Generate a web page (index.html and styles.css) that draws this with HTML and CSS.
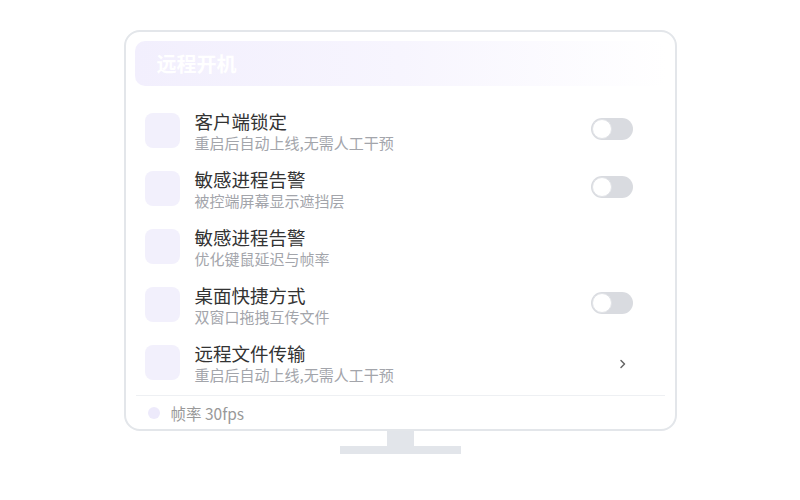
FILE: index.html
```html
<!DOCTYPE html>
<html lang="zh-CN">
<head>
    <meta charset="UTF-8">
    <meta name="viewport" content="width=device-width, initial-scale=1.0">
    <title>远程开机</title>
    <link rel="stylesheet" href="styles.css">
</head>
<body>
    <div class="monitor">
        <div class="screen-header">远程开机</div>

        <div class="row">
            <div class="row-icon"></div>
            <div class="row-text">
                <div class="row-title">客户端锁定</div>
                <div class="row-sub">重启后自动上线,无需人工干预</div>
            </div>
            <div class="row-action"><span class="toggle"></span></div>
        </div>
        <div class="row">
            <div class="row-icon"></div>
            <div class="row-text">
                <div class="row-title">敏感进程告警</div>
                <div class="row-sub">被控端屏幕显示遮挡层</div>
            </div>
            <div class="row-action"><span class="toggle"></span></div>
        </div>
        <div class="row">
            <div class="row-icon"></div>
            <div class="row-text">
                <div class="row-title">敏感进程告警</div>
                <div class="row-sub">优化键鼠延迟与帧率</div>
            </div>
            <div class="row-action"></div>
        </div>
        <div class="row">
            <div class="row-icon"></div>
            <div class="row-text">
                <div class="row-title">桌面快捷方式</div>
                <div class="row-sub">双窗口拖拽互传文件</div>
            </div>
            <div class="row-action"><span class="toggle"></span></div>
        </div>
        <div class="row">
            <div class="row-icon"></div>
            <div class="row-text">
                <div class="row-title">远程文件传输</div>
                <div class="row-sub">重启后自动上线,无需人工干预</div>
            </div>
            <div class="row-action">
                <svg class="chevron" width="8" height="10" viewBox="0 0 8 10">
                    <polyline points="2,1.5 5.5,5 2,8.5" fill="none" stroke="#666" stroke-width="1.5" stroke-linecap="round" stroke-linejoin="round"/>
                </svg>
            </div>
        </div>

        <div class="screen-footer">
            <span class="dot"></span>
            <span>帧率 30fps</span>
        </div>
    </div>
    <div class="stand-neck"></div>
    <div class="stand-base"></div>
</body>
</html>
```

FILE: styles.css
```css
body {
    margin: 0;
    padding-top: 30px;
    background: #fff;
    font-family: "Noto Sans CJK SC", "Noto Sans", sans-serif;
    color: #333;
}
.monitor {
    box-sizing: border-box;
    width: 553px;
    height: 401px;
    margin: 0 auto;
    padding: 9px 9px 0;
    border: 2px solid #e3e6ea;
    border-radius: 16px;
    background: #fff;
}
.screen-header {
    height: 45px;
    padding-left: 22px;
    margin-bottom: 19px;
    border-radius: 10px;
    background: linear-gradient(90deg, #f2effd 0%, #f7f5fe 50%, #ffffff 100%);
    color: #fff;
    font-size: 20px;
    font-weight: 700;
    line-height: 45px;
}
.row {
    display: flex;
    align-items: flex-start;
    height: 58px;
    box-sizing: border-box;
    padding: 8px 0 0 10px;
}
.row-icon {
    width: 35px;
    height: 35px;
    flex-shrink: 0;
    border-radius: 8px;
    background: #f2f0fc;
}
.row-text {
    flex: 1;
    margin: -3px 0 0 15px;
}
.row-title {
    font-size: 18.5px;
    line-height: 22px;
    color: #333;
}
.row-sub {
    font-size: 15px;
    line-height: 22px;
    color: #a3a5ab;
}
.row-action {
    display: flex;
    justify-content: flex-end;
    width: 42px;
    margin: 5px 33px 0 0;
}
.toggle {
    position: relative;
    display: block;
    width: 42px;
    height: 22px;
    border-radius: 11px;
    background: #d9dbe0;
}
.toggle::after {
    content: "";
    position: absolute;
    left: 1px;
    top: 1px;
    width: 18px;
    height: 18px;
    border: 1px solid #e1e3e7;
    border-radius: 50%;
    background: #fff;
}
.chevron {
    display: block;
    margin: 9px 6px 0 0;
}
.screen-footer {
    display: flex;
    align-items: center;
    gap: 11px;
    height: 33px;
    margin: 0 1px;
    padding-left: 12px;
    border-top: 1px solid #eef0f3;
    font-size: 15.5px;
    color: #999;
}
.dot {
    width: 12px;
    height: 12px;
    border-radius: 50%;
    background: #edeafb;
}
.stand-neck {
    width: 27px;
    height: 15px;
    margin: 0 auto;
    background: #e2e5ea;
}
.stand-base {
    width: 121px;
    height: 8px;
    margin: 0 auto;
    background: #e2e5ea;
}
```
